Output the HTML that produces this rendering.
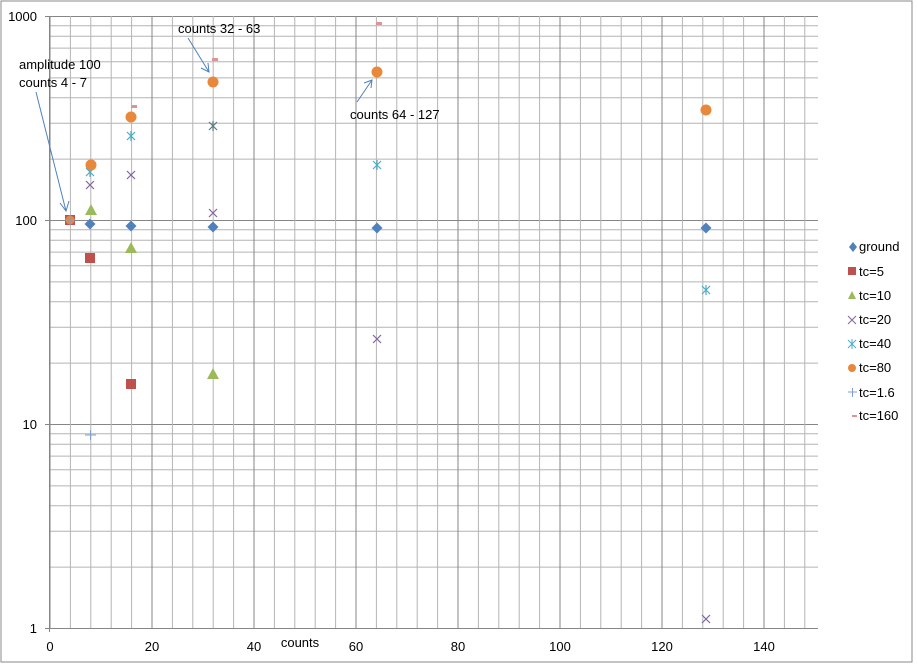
<!DOCTYPE html>
<html><head><meta charset="utf-8"><style>
html,body{margin:0;padding:0;background:#fff;}
svg{display:block;font-family:"Liberation Sans",sans-serif;}
</style></head><body>
<svg width="918" height="664" viewBox="0 0 918 664" xmlns="http://www.w3.org/2000/svg">
<defs>
<pattern id="vmin" patternUnits="userSpaceOnUse" x="49.5" y="0" width="20.4" height="664"><line x1="0.5" y1="0" x2="0.5" y2="664" stroke="#b4b4b4" stroke-width="1"/></pattern>
<pattern id="vmaj" patternUnits="userSpaceOnUse" x="49.5" y="0" width="102" height="664"><line x1="0.5" y1="0" x2="0.5" y2="664" stroke="#868686" stroke-width="1"/></pattern>
<pattern id="hlog" patternUnits="userSpaceOnUse" x="0" y="16" width="918" height="204">
<g stroke="#b4b4b4" stroke-width="1">
<line x1="0" x2="918" y1="9.8" y2="9.8"/><line x1="0" x2="918" y1="20.3" y2="20.3"/>
<line x1="0" x2="918" y1="32.1" y2="32.1"/><line x1="0" x2="918" y1="45.8" y2="45.8"/>
<line x1="0" x2="918" y1="61.9" y2="61.9"/><line x1="0" x2="918" y1="81.7" y2="81.7"/>
<line x1="0" x2="918" y1="107.2" y2="107.2"/><line x1="0" x2="918" y1="143.1" y2="143.1"/>
</g>
<line x1="0" x2="918" y1="0.5" y2="0.5" stroke="#868686" stroke-width="1"/>
</pattern>
</defs>
<rect x="1" y="1" width="911" height="661" fill="#fff" stroke="#888" stroke-width="1"/>
<rect x="49" y="16" width="769" height="612" fill="url(#hlog)"/>
<rect x="49" y="16" width="769" height="612" fill="url(#vmin)"/>
<rect x="49" y="16" width="769" height="612" fill="url(#vmaj)"/>
<line x1="49" y1="628.5" x2="818" y2="628.5" stroke="#868686"/>
<line x1="49.5" y1="16" x2="49.5" y2="632" stroke="#868686"/>
<g stroke="#868686"><line x1="45" x2="49" y1="16.5" y2="16.5"/><line x1="45" x2="49" y1="220.5" y2="220.5"/><line x1="45" x2="49" y1="424.5" y2="424.5"/><line x1="45" x2="49" y1="628.5" y2="628.5"/></g>
<g font-size="13" fill="#000" text-anchor="end">
<text x="37" y="21">1000</text><text x="37" y="225">100</text><text x="37" y="429">10</text><text x="37" y="633">1</text>
</g>
<g font-size="13" fill="#000" text-anchor="middle">
<text x="50" y="651">0</text><text x="152" y="651">20</text><text x="254" y="651">40</text><text x="356" y="651">60</text><text x="458" y="651">80</text><text x="560" y="651">100</text><text x="662" y="651">120</text><text x="764" y="651">140</text>
<text x="300" y="647">counts</text>
</g>
<g fill="#d99694"><rect x="88" y="160" width="6" height="3"/><rect x="131" y="105" width="6" height="3"/><rect x="212" y="58" width="6" height="3"/><rect x="376" y="22" width="6" height="3"/></g>
<g stroke="#4bacc6" stroke-width="1.2">
<path d="M86 168 L94 176 M94 168 L86 176 M90 167 V177"/>
<path d="M127 132 L135 140 M135 132 L127 140 M131 131 V141"/>
<path d="M209 122 L217 130 M217 122 L209 130 M213 121 V131" stroke="#5a7a86"/>
<path d="M373 161 L381 169 M381 161 L373 169 M377 160 V170"/>
<path d="M702 286 L710 294 M710 286 L702 294 M706 285 V295"/>
</g>
<g stroke="#8064a2" stroke-width="1.2">
<path d="M86 181 L94 189 M94 181 L86 189"/>
<path d="M127 171 L135 179 M135 171 L127 179"/>
<path d="M209 209 L217 217 M217 209 L209 217"/>
<path d="M373 335 L381 343 M381 335 L373 343"/>
<path d="M702 615 L710 623 M710 615 L702 623"/>
</g>
<g fill="#9bbb59"><path d="M91 204 L97 215 L85 215Z"/><path d="M131 242 L137 253 L125 253Z"/><path d="M213 368 L219 379 L207 379Z"/></g>
<g fill="#c0504d"><rect x="85" y="253" width="10" height="10"/><rect x="126" y="379" width="10" height="10"/><rect x="65" y="215" width="10" height="10"/></g>
<g fill="#e8883a"><circle cx="91" cy="165" r="5.5"/><circle cx="131" cy="117" r="5.5"/><circle cx="213" cy="82" r="5.5"/><circle cx="377" cy="72" r="5.5"/><circle cx="706" cy="110" r="5.5"/><circle cx="70" cy="220" r="4.5"/></g>
<g fill="#4f81bd"><path d="M90 218.5 L95.5 224 L90 229.5 L84.5 224Z"/><path d="M131 220.5 L136.5 226 L131 231.5 L125.5 226Z"/><path d="M213 221.5 L218.5 227 L213 232.5 L207.5 227Z"/><path d="M377 222.5 L382.5 228 L377 233.5 L371.5 228Z"/><path d="M706 222.5 L711.5 228 L706 233.5 L700.5 228Z"/></g>
<g stroke="#7f9fd0" stroke-width="1"><path d="M85 435 H96 M90.5 430 V440"/><path d="M65 220 H75 M70 215 V225"/></g>
<g font-size="13" fill="#000">
<text x="19" y="69">amplitude 100</text><text x="19" y="87">counts 4 - 7</text>
<text x="178" y="33">counts 32 - 63</text>
<text x="350" y="119">counts 64 - 127</text>
</g>
<g stroke="#4f81bd" stroke-width="1" fill="none">
<path d="M36 92 L66 211 M60 203 L66 211 L69 201"/>
<path d="M188 38 L209 72 M201 68 L209 72 L208 63"/>
<path d="M357 102 L372 80 M364 83 L372 80 L371 88"/>
</g>
<g font-size="13" fill="#000">
<path d="M853 242 L857 247 L853 252 L849 247Z" fill="#4f81bd"/><text x="859" y="251">ground</text>
<rect x="848" y="267" width="8" height="8" fill="#c0504d"/><text x="859" y="276">tc=5</text>
<path d="M852 291 L856 299 L848 299Z" fill="#9bbb59"/><text x="859" y="300">tc=10</text>
<path d="M848 316 L856 324 M856 316 L848 324" stroke="#8064a2"/><text x="859" y="324">tc=20</text>
<path d="M848 340 L856 348 M856 340 L848 348 M852 339 V349" stroke="#4bacc6"/><text x="859" y="348">tc=40</text>
<circle cx="852" cy="368" r="4" fill="#e8883a"/><text x="859" y="372">tc=80</text>
<path d="M848 392 H857 M852.5 388 V397" stroke="#7f9fd0"/><text x="859" y="397">tc=1.6</text>
<rect x="852" y="415" width="5" height="2" fill="#d99694"/><text x="859" y="420">tc=160</text>
</g>
</svg>
</body></html>
